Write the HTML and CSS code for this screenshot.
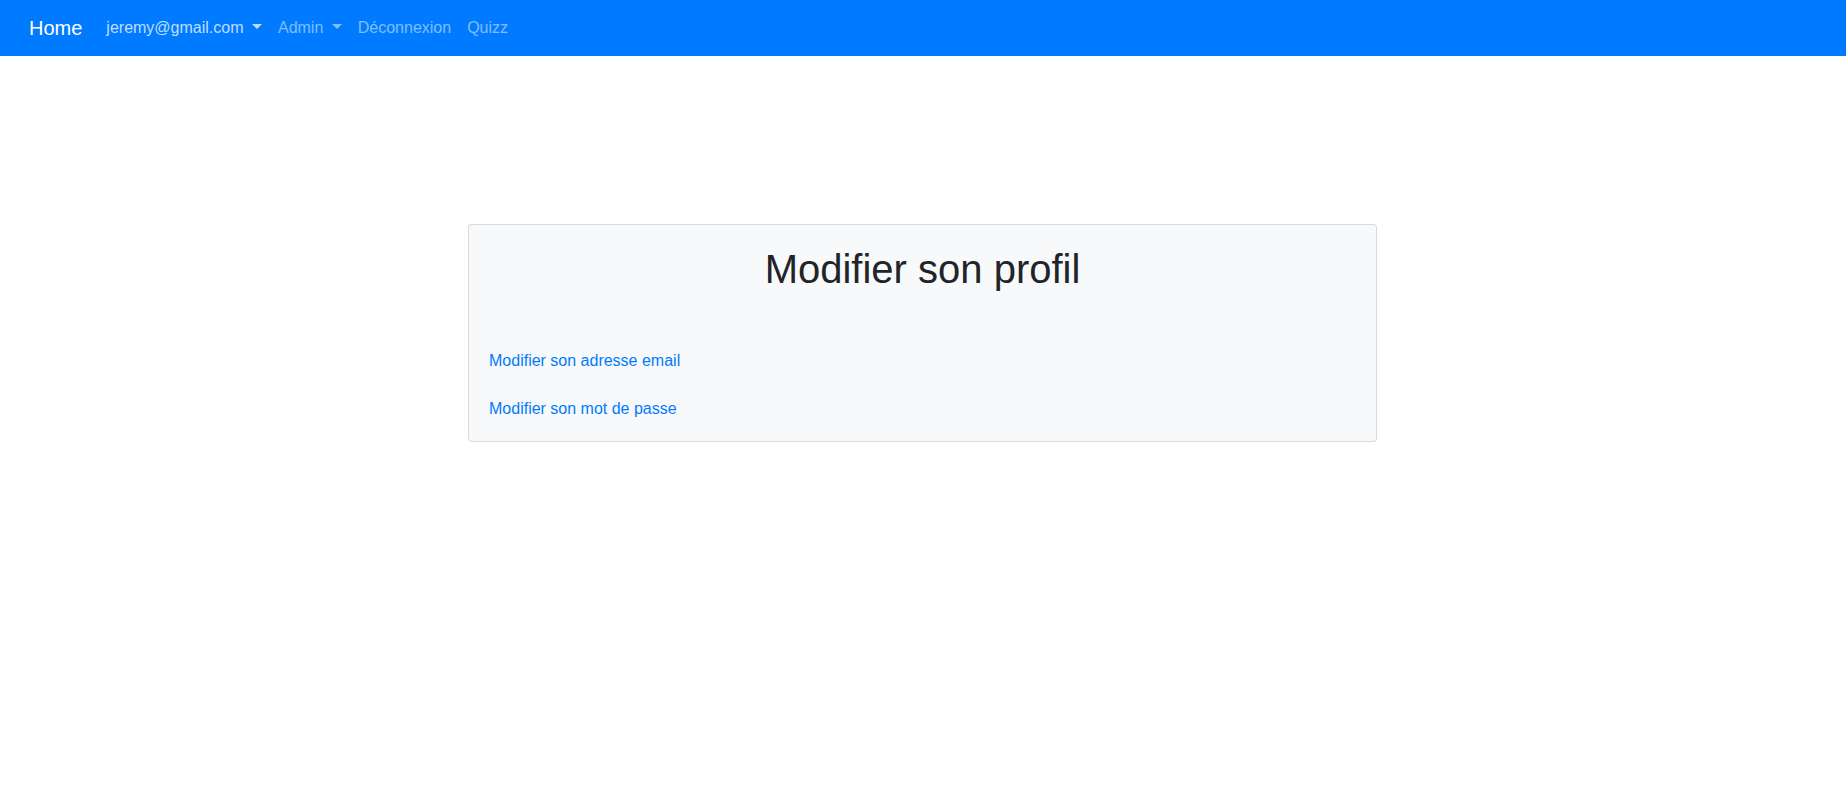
FILE: index.html
```html
<!DOCTYPE html>
<html lang="fr">
<head>
<meta charset="utf-8">
<title>Modifier son profil</title>
<link rel="stylesheet" href="styles.css">
</head>
<body>
<nav class="navbar">
  <a class="brand" href="#">Home</a>
  <ul class="nav">
    <li><a class="nav-link hover dropdown" href="#">jeremy@gmail.com </a></li>
    <li><a class="nav-link dropdown" href="#">Admin </a></li>
    <li><a class="nav-link" href="#">Déconnexion</a></li>
    <li><a class="nav-link" href="#">Quizz</a></li>
  </ul>
</nav>
<main class="main">
  <section class="card">
    <h1 class="title">Modifier son profil</h1>
    <ul class="links">
      <li><a href="#">Modifier son adresse email</a></li>
      <li><a href="#">Modifier son mot de passe</a></li>
    </ul>
  </section>
</main>
</body>
</html>
```
FILE: styles.css
```css
* { box-sizing: border-box; }
html, body { margin: 0; padding: 0; }
body {
  font-family: "Liberation Sans", Arial, sans-serif;
  font-size: 16px;
  line-height: 1.5;
  color: #212529;
  background: #fff;
}
a { text-decoration: none; }

.navbar {
  display: flex;
  align-items: center;
  height: 56px;
  padding: 8px 29px;
  background: #007bff;
}
.brand {
  font-size: 20px;
  line-height: 30px;
  padding: 5px 0;
  margin-right: 16px;
  color: #fff;
}
.nav {
  display: flex;
  list-style: none;
  margin: 0;
  padding: 0;
}
.nav-link {
  display: block;
  padding: 8px;
  line-height: 24px;
  color: rgba(255, 255, 255, 0.5);
}
.nav-link.hover { color: rgba(255, 255, 255, 0.75); }
.dropdown::after {
  content: "";
  display: inline-block;
  margin-left: 4px;
  vertical-align: 4px;
  border-top: 5px solid;
  border-left: 5px solid transparent;
  border-right: 5px solid transparent;
}

.main {
  padding-top: 168px;
}
.card {
  width: 909px;
  margin-left: calc(50% - 455px);
  padding: 20px;
  background: #f8f9fa;
  border: 1px solid rgba(0, 0, 0, 0.125);
  border-radius: 4px;
}
.title {
  margin: 0 0 56px;
  font-size: 40px;
  font-weight: 400;
  line-height: 48px;
  text-align: center;
  color: #212529;
}
.links {
  list-style: none;
  margin: 0;
  padding: 0;
  display: flex;
  flex-direction: column;
  gap: 24px;
}
.links a { color: #007bff; }
```
